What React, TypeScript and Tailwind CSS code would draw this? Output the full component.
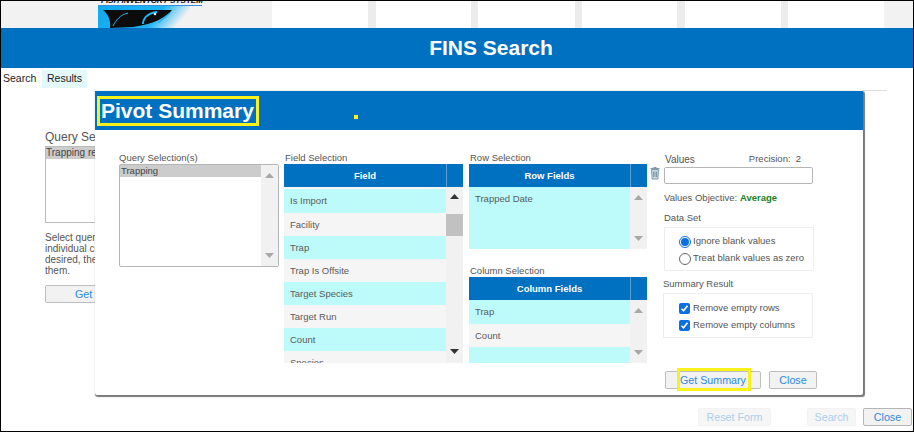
import type { ReactNode } from "react";

const navCells = [
  { w: "w-[96px]", gray: false },
  { w: "w-[8px]", gray: true },
  { w: "w-[95px]", gray: false },
  { w: "w-[7px]", gray: true },
  { w: "w-[97px]", gray: false },
  { w: "w-[7px]", gray: true },
  { w: "w-[95px]", gray: false },
  { w: "w-[8px]", gray: true },
  { w: "w-[96px]", gray: false },
  { w: "w-[7px]", gray: true },
  { w: "w-[96px]", gray: false },
];

function Arrow({ up, dark }: { up?: boolean; dark?: boolean }) {
  return (
    <svg width="9" height="5" viewBox="0 0 9 5" className={dark ? "fill-[#333333]" : "fill-[#a8a8a8]"}>
      <path d={up ? "M4.5 0L9 5H0z" : "M0 0h9L4.5 5z"} />
    </svg>
  );
}

function Scrollbar({ dark, thumb }: { dark?: boolean; thumb?: boolean }) {
  return (
    <div className={`relative flex w-[17px] shrink-0 flex-col items-center justify-between bg-[#f1f1f1] ${dark ? "pb-[9px] pt-[7px]" : "py-[8px]"}`}>
      <Arrow up dark={dark} />
      {thumb && <div className="absolute top-[27px] h-[22px] w-full bg-[#c1c1c1]" />}
      <Arrow dark={dark} />
    </div>
  );
}

function Label({ children, className = "" }: { children: ReactNode; className?: string }) {
  return <div className={`text-[9.5px] leading-[13px] text-[#555555] ${className}`}>{children}</div>;
}

function FieldRow({ children, teal, h = "h-[23px]" }: { children?: ReactNode; teal?: boolean; h?: string }) {
  return (
    <div className={`flex shrink-0 items-center pl-[6px] pt-[1px] text-[9.5px] text-[#5a5a5a] ${h} ${teal ? "bg-[#bdfbfb]" : "bg-[#f5f5f5]"}`}>
      {children}
    </div>
  );
}

function TableHead({ title }: { title: string }) {
  return (
    <div className="flex h-[23px] bg-[#0070c0] text-[9.5px] font-bold text-white">
      <div className="flex flex-1 items-center justify-center pt-[1px]">{title}</div>
      <div className="w-[17px] border-l border-[#5a9fd6]" />
    </div>
  );
}

function PageButton({ children, className = "" }: { children: ReactNode; className?: string }) {
  return (
    <button className={`flex h-[18px] items-center justify-center rounded-[2px] border text-[10.7px] ${className}`}>
      {children}
    </button>
  );
}

export default function App() {
  return (
    <div className="relative h-[432px] w-[914px] overflow-hidden border border-black bg-white font-['Liberation_Sans',Arial,sans-serif]">
      {/* top nav strip */}
      <div className="flex h-[27px] bg-[#f2f2f2]">
        <div className="w-[97px]" />
        <div className="relative h-full w-[92px]">
          <svg width="92" height="22" viewBox="0 0 92 22" className="absolute left-0 top-[5px]">
            <defs>
              <linearGradient id="logoBg" x1="0" x2="1" y1="0" y2="0.2">
                <stop offset="0" stopColor="#12a9ee" />
                <stop offset="0.7" stopColor="#1fb4f4" />
                <stop offset="1" stopColor="#f2f2f2" />
              </linearGradient>
            </defs>
            <rect width="92" height="22" fill="url(#logoBg)" />
            <path d="M5 4H74C68 12 55 18 35 21L12 22C13 14 10 8 5 4z" fill="#0c0c0c" />
            <path d="M15 20C18 14 22 9 30 7" stroke="#1fb4f4" strokeWidth="1" fill="none" />
            <path d="M45 18C45 12 50 7 59 6" stroke="#1fb4f4" strokeWidth="2" fill="none" />
            <path d="M60 17L72 7" stroke="#1fb4f4" strokeWidth="1.5" />
            <circle cx="57" cy="8" r="1.3" fill="#d8f3ff" />
          </svg>
          <div className="absolute -top-[5px] left-[3px] text-[8px] font-bold italic leading-[10px] whitespace-nowrap text-[#111111]">
            FISH INVENTORY SYSTEM
          </div>
          <div className="absolute left-0 top-[4px] h-px w-[104px] bg-[#3a8fd8]" />
        </div>
        <div className="w-[82px]" />
        {navCells.map((c, i) => (
          <div key={i} className={`${c.w} ${c.gray ? "bg-[#ececec]" : "bg-white"}`} />
        ))}
      </div>

      {/* page title */}
      <div className="flex h-[40px] items-center justify-center bg-[#0070c0] pb-[1px] pl-[68px] text-[21px] font-bold text-white">FINS Search</div>

      {/* tabs */}
      <div className="mt-[2px] flex h-[18px] text-[10.5px] text-[#222222]">
        <div className="flex w-[41px] items-center pl-[2px]">Search</div>
        <div className="flex w-[45px] items-center justify-center bg-[#e3f8fb]">Results</div>
      </div>

      {/* page content behind the dialog */}
      <div className="ml-[44px] mt-[42px] w-[150px]">
        <div className="text-[12px] leading-[15px] text-[#555555]">Query Selection(s)</div>
        <div className="mt-[1px] h-[77px] border border-[#bbbbbb]">
          <div className="h-[12px] bg-[#cccccc] text-[10px] leading-[12px] text-[#444444]">Trapping results</div>
        </div>
        <div className="mt-[9px] text-[10px] leading-[11px] text-[#555555]">
          Select query
          <br />
          individual col
          <br />
          desired, then
          <br />
          them.
        </div>
        <PageButton className="mt-[9px] w-[126px] border-[#bdbdbd] bg-[#f2f2f2] text-[#2e8bdc]">Get Summary</PageButton>
      </div>

      {/* page footer buttons */}
      <div className="absolute bottom-[5px] right-[1px] flex">
        <PageButton className="w-[73px] border-[#f2f2f2] bg-[#f6f6f6] text-[#a9d0ee]">Reset Form</PageButton>
        <PageButton className="ml-[36px] w-[49px] border-[#f2f2f2] bg-[#f6f6f6] text-[#a9d0ee]">Search</PageButton>
        <PageButton className="ml-[7px] w-[49px] border-[#b5b5b5] bg-[#f2f2f2] text-[#2e8bdc]">Close</PageButton>
      </div>

      {/* hairline right of the dialog */}
      <div className="absolute left-[862px] top-[89px] h-px w-[24px] bg-[#dddddd]" />

      {/* dialog */}
      <div className="absolute left-[94px] top-[90px] h-[304px] w-[768px] rounded-[2px] bg-white shadow-[1px_1px_1px_1px_#777777]">
        <div className="relative flex h-[39px] items-center bg-[#0070c0]">
          <div className="ml-[2px] flex h-[30px] items-center border-[3px] border-[#f8f11a] pl-[1px] pr-[2px] text-[21px] font-bold text-white">
            Pivot Summary
          </div>
          <div className="absolute left-[259px] top-[24px] h-[4px] w-[4px] bg-[#f8f11a]" />
        </div>

        <div className="flex pl-[24px] pt-[21px]">
          {/* query selection */}
          <div className="w-[160px]">
            <Label>Query Selection(s)</Label>
            <div className="flex h-[103px] rounded-[2px] border border-[#b5b5b5]">
              <div className="flex-1">
                <div className="h-[12px] bg-[#cccccc] pl-[1px] text-[9.5px] leading-[12px] text-[#444444]">Trapping</div>
              </div>
              <Scrollbar />
            </div>
          </div>

          {/* field selection */}
          <div className="ml-[5px] w-[179px]">
            <Label className="pl-[1px]">Field Selection</Label>
            <TableHead title="Field" />
            <div className="flex h-[176px] overflow-hidden">
              <div className="flex-1 overflow-hidden bg-[#f5f5f5] pt-[2px]">
                <FieldRow teal h="h-[24px]">Is Import</FieldRow>
                <FieldRow>Facility</FieldRow>
                <FieldRow teal>Trap</FieldRow>
                <FieldRow>Trap Is Offsite</FieldRow>
                <FieldRow teal>Target Species</FieldRow>
                <FieldRow>Target Run</FieldRow>
                <FieldRow teal>Count</FieldRow>
                <FieldRow>Species</FieldRow>
              </div>
              <Scrollbar dark thumb />
            </div>
          </div>

          {/* row and column selection */}
          <div className="ml-[6px] flex w-[178px] flex-col">
            <Label className="pl-[1px]">Row Selection</Label>
            <TableHead title="Row Fields" />
            <div className="flex h-[62px]">
              <div className="flex-1 bg-[#bdfbfb]">
                <div className="flex h-[23px] items-center pl-[6px] pt-[1px] text-[9.5px] text-[#5a5a5a]">Trapped Date</div>
              </div>
              <Scrollbar />
            </div>
            <Label className="mt-[15px] pl-[1px]">Column Selection</Label>
            <TableHead title="Column Fields" />
            <div className="flex h-[63px] overflow-hidden">
              <div className="flex-1 overflow-hidden">
                <FieldRow teal h="h-[24px]">Trap</FieldRow>
                <FieldRow>Count</FieldRow>
                <FieldRow teal h="h-[16px]" />
              </div>
              <Scrollbar />
            </div>
          </div>

          {/* trash */}
          <div className="ml-[3px] mt-[15px] h-fit">
            <svg width="10" height="14" viewBox="0 0 10 14" fill="none" stroke="#7f9aa8" strokeWidth="1">
              <path d="M3.5 1.5h3M.5 2.5h9" />
              <path d="M1.5 3.5l.6 9.5h5.8l.6-9.5z" fill="#c9dbe4" />
              <path d="M3.5 5.5v5.5M5 5.5v5.5M6.5 5.5v5.5" />
            </svg>
          </div>

          {/* values and options */}
          <div className="ml-[4px] mt-[2px] flex w-[154px] flex-col">
            <div className="flex h-[13px] items-center text-[10px] text-[#555555]">
              <span className="ml-[1px]">Values</span>
              <span className="ml-[54px] text-[9.5px]">Precision:&nbsp; 2</span>
            </div>
            <div className="mt-[1px] h-[17px] w-[149px] rounded-[2px] border border-[#b5b5b5] bg-white" />
            <div className="mt-[8px] flex h-[13px] items-center text-[9.5px] text-[#555555]">
              Values Objective:&nbsp;
              <span className="font-bold text-[#1b7f1b]">Average</span>
            </div>
            <Label className="mt-[6px]">Data Set</Label>
            <div className="mt-[3px] h-[44px] w-[150px] border border-[#eeeeee] pl-[14px] pt-[5px] text-[9.5px] text-[#555555]">
              <div className="flex h-[17px] items-center gap-[2px]">
                <span className="flex h-[12px] w-[12px] items-center justify-center rounded-full border border-[#0a6fe0]">
                  <span className="h-[8px] w-[8px] rounded-full bg-[#0a6fe0]" />
                </span>
                Ignore blank values
              </div>
              <div className="flex h-[17px] items-center gap-[2px]">
                <span className="h-[12px] w-[12px] rounded-full border border-[#666666] bg-white" />
                Treat blank values as zero
              </div>
            </div>
            <Label className="-ml-[1px] mt-[6px]">Summary Result</Label>
            <div className="-ml-[1px] mt-[3px] h-[45px] w-[150px] border border-[#eeeeee] pl-[15px] pt-[6px] text-[9.5px] text-[#555555]">
              {["Remove empty rows", "Remove empty columns"].map((t) => (
                <div key={t} className="flex h-[17px] items-center gap-[3px]">
                  <span className="flex h-[11px] w-[11px] items-center justify-center rounded-[2px] bg-[#0a6fe0]">
                    <svg width="9" height="9" viewBox="0 0 9 9" fill="none" stroke="#ffffff" strokeWidth="1.6">
                      <path d="M1.5 4.7l2 2 4-5" />
                    </svg>
                  </span>
                  {t}
                </div>
              ))}
            </div>
          </div>
        </div>

        {/* dialog buttons */}
        <div className="absolute left-[570px] top-[280px] flex">
          <div className="relative">
            <PageButton className="w-[96px] border-[#bdbdbd] bg-[#f2f2f2] text-[#2e8bdc]">Get Summary</PageButton>
            <div className="absolute -top-[3px] left-[12px] h-[23px] w-[74px] border-[3px] border-[#f8f11a]" />
          </div>
          <PageButton className="ml-[8px] w-[48px] border-[#bdbdbd] bg-[#f2f2f2] text-[#2e8bdc]">Close</PageButton>
        </div>
      </div>
    </div>
  );
}
